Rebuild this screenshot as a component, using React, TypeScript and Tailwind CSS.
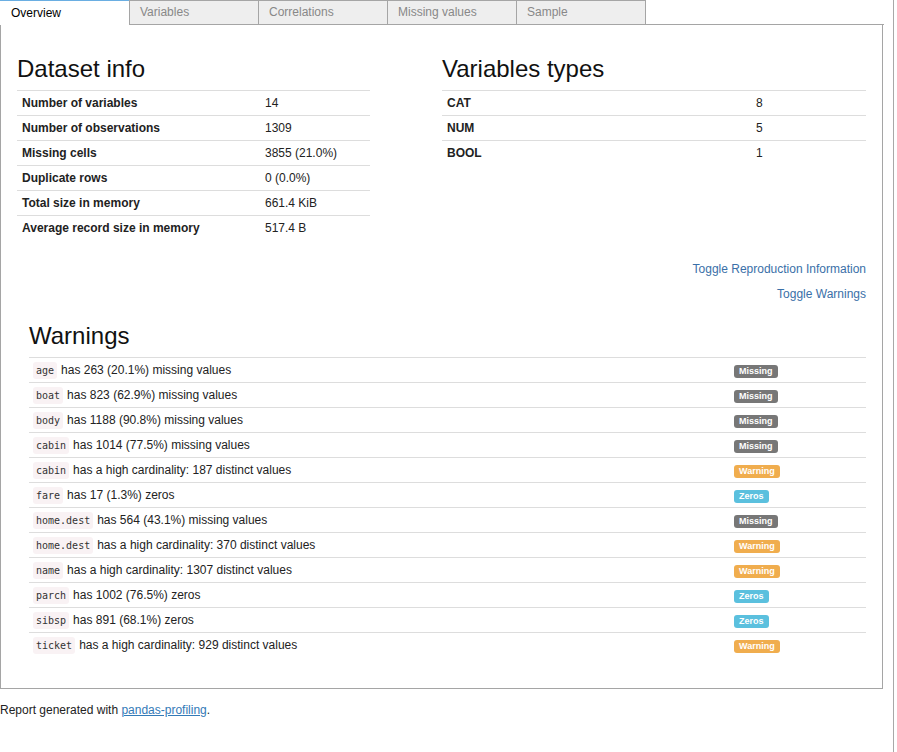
const datasetInfo = [
  { text: "Number of variables", value: "14" },
  { text: "Number of observations", value: "1309" },
  { text: "Missing cells", value: "3855 (21.0%)" },
  { text: "Duplicate rows", value: "0 (0.0%)" },
  { text: "Total size in memory", value: "661.4 KiB" },
  { text: "Average record size in memory", value: "517.4 B" },
]

const variableTypes = [
  { text: "CAT", value: "8" },
  { text: "NUM", value: "5" },
  { text: "BOOL", value: "1" },
]

type Kind = "Missing" | "Warning" | "Zeros"

const warnings: { name: string; msg: string; kind: Kind }[] = [
  { name: "age", msg: "has 263 (20.1%) missing values", kind: "Missing" },
  { name: "boat", msg: "has 823 (62.9%) missing values", kind: "Missing" },
  { name: "body", msg: "has 1188 (90.8%) missing values", kind: "Missing" },
  { name: "cabin", msg: "has 1014 (77.5%) missing values", kind: "Missing" },
  { name: "cabin", msg: "has a high cardinality: 187 distinct values", kind: "Warning" },
  { name: "fare", msg: "has 17 (1.3%) zeros", kind: "Zeros" },
  { name: "home.dest", msg: "has 564 (43.1%) missing values", kind: "Missing" },
  { name: "home.dest", msg: "has a high cardinality: 370 distinct values", kind: "Warning" },
  { name: "name", msg: "has a high cardinality: 1307 distinct values", kind: "Warning" },
  { name: "parch", msg: "has 1002 (76.5%) zeros", kind: "Zeros" },
  { name: "sibsp", msg: "has 891 (68.1%) zeros", kind: "Zeros" },
  { name: "ticket", msg: "has a high cardinality: 929 distinct values", kind: "Warning" },
]

const badgeColor: Record<Kind, string> = {
  Missing: "bg-[#777777]",
  Warning: "bg-[#f0ad4e]",
  Zeros: "bg-[#5bc0de]",
}

const tabs = ["Variables", "Correlations", "Missing values", "Sample"]

const InfoTable = ({ rows, first }: { rows: { text: string; value: string }[]; first: string }) => (
  <div>
    {rows.map((item, key) => (
      <div key={key} className="flex h-[25px] items-center border-t border-[#dddddd]">
        <div className={`${first} px-[5px] font-bold`}>{item.text}</div>
        <div className="px-[5px]">{item.value}</div>
      </div>
    ))}
  </div>
)

export default function App() {
  return (
    <div
      className="w-[894px] min-h-[752px] border-r border-[#a8a8a8] bg-white text-[12px] leading-[17px] text-[#222]"
      style={{ fontFamily: '"Liberation Sans", Arial, sans-serif' }}
    >
      {/* tabs */}
      <div className="flex h-[25px]">
        <div className="w-[130px] border-t border-[#6aaee2] bg-white pl-[11px] pt-[4px] text-black">Overview</div>
        {tabs.map((t) => (
          <div
            key={t}
            className="-ml-px w-[130px] border border-[#a5a5a5] bg-[#eeeeee] pl-[10px] pt-[3px] text-[#888]"
          >
            {t}
          </div>
        ))}
        <div className="w-[238px] border-b border-[#a5a5a5]" />
      </div>

      {/* panel */}
      <div className="w-[883px] border-x border-b border-[#a5a5a5] pt-[31px] pb-[31px]">
        <div className="flex">
          <div className="ml-[16px] w-[353px]">
            <h3 className="mb-[8px] text-[24px] leading-[26px] text-[#111]">Dataset info</h3>
            <InfoTable rows={datasetInfo} first="w-[243px]" />
          </div>
          <div className="ml-[72px] w-[424px]">
            <h3 className="mb-[8px] text-[24px] leading-[26px] text-[#111]">Variables types</h3>
            <InfoTable rows={variableTypes} first="w-[309px]" />
          </div>
        </div>

        <div className="mt-[17px] mr-[16px] flex flex-col items-end text-[#3a70a8]">
          <a className="h-[25px] leading-[25px]">Toggle Reproduction Information</a>
          <a className="h-[25px] leading-[25px]">Toggle Warnings</a>
        </div>

        <div className="ml-[28px] mr-[16px] mt-[16px]">
          <h3 className="mb-[8px] text-[24px] leading-[26px] text-[#111]">Warnings</h3>
          {warnings.map((w, key) => (
            <div key={key} className="flex h-[25px] items-center border-t border-[#dddddd]">
              <div className="flex w-[700px] items-center pl-[4px]">
                <code
                  className="rounded-[3px] bg-[#f9f2f4] px-[3px] py-[2px] text-[10px] leading-[13px] text-[#333]"
                  style={{ fontFamily: '"DejaVu Sans Mono", "Liberation Mono", monospace' }}
                >
                  {w.name}
                </code>
                <span className="ml-[4px]">{w.msg}</span>
              </div>
              <div className="pl-[5px]">
                <span
                  className={`${badgeColor[w.kind]} inline-block rounded-[3px] px-[5px] pt-[1px] pb-[2px] text-[9px] font-bold leading-[10px] text-white`}
                >
                  {w.kind}
                </span>
              </div>
            </div>
          ))}
        </div>
      </div>

      <p className="mt-[13px]">
        Report generated with <a className="text-[#337ab7] underline">pandas-profiling</a>.
      </p>
    </div>
  )
}
